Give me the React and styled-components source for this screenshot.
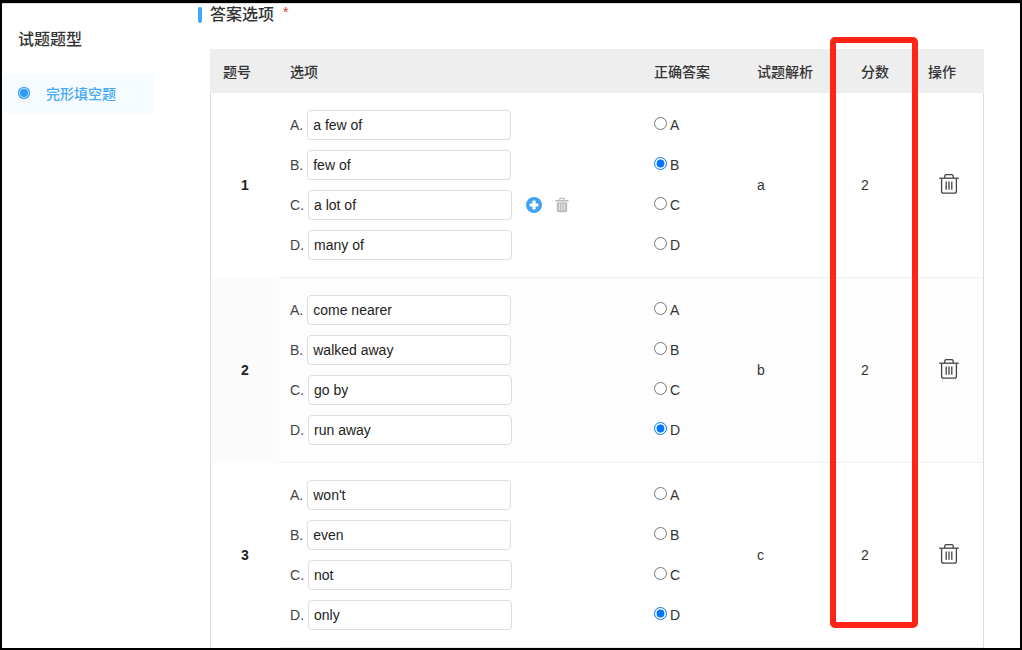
import React from "react";
import styled, { createGlobalStyle } from "styled-components";

const Global = createGlobalStyle`
  html, body { margin: 0; padding: 0; background: #fff; overflow: hidden; }
`;

const Frame = styled.div`
  box-sizing: border-box;
  width: 1022px;
  height: 650px;
  position: relative;
  overflow: hidden;
  background: #fff;
  border-style: solid;
  border-color: #000;
  border-width: 3px 2px 2px 2px;
  font-family: "Liberation Sans", "Noto Sans CJK SC", sans-serif;
  color: #333;
`;
const Inner = styled.div`
  display: flex;
  height: 100%;
  box-sizing: border-box;
  border-top: 1px solid #ddd;
`;
const Sidebar = styled.aside`
  width: 196px;
  flex: none;
  padding-top: 25px;
  box-sizing: border-box;
`;
const SideTitle = styled.div`
  font-size: 16px;
  font-weight: 500;
  line-height: 22px;
  color: #333;
  padding-left: 16px;
`;
const SideItem = styled.div`
  margin: 23px 0 0 1px;
  width: 151px;
  height: 39px;
  background: #f6fbff;
  display: flex;
  align-items: center;
  padding: 0 0 1px 15px;
  box-sizing: border-box;
  gap: 16px;
  font-size: 14px;
  font-weight: 500;
  color: #45a9f5;
`;
const Dot = styled.span`
  width: 12px;
  height: 12px;
  box-sizing: border-box;
  border-radius: 50%;
  background: #2f9bf4;
  box-shadow: inset 0 0 0 1px #2f9bf4, inset 0 0 0 2px #bfe0fb;
`;
const Main = styled.main`
  flex: 1;
  min-width: 0;
`;
const Heading = styled.div`
  display: flex;
  align-items: center;
  height: 16px;
  margin-top: 3px;
  font-size: 16px;
  font-weight: 500;
  line-height: 22px;
  color: #333;
`;
const HeadBar = styled.span`
  width: 4px;
  height: 16px;
  border-radius: 2px;
  background: #3fa7f7;
  margin-right: 8px;
`;
const Req = styled.span`
  color: #d9342b;
  font-size: 14px;
  font-weight: 400;
  margin-left: 9px;
  position: relative;
  top: -3px;
`;
const Table = styled.div`
  margin: 26px 0 0 12px;
  width: 774px;
  height: 620px;
  box-sizing: border-box;
  border-left: 1px solid #ddd;
  border-right: 1px solid #ddd;
`;
const grid = `
  display: grid;
  grid-template-columns: 68px 364px 103px 104px 67px 1fr;
`;
const HeadRow = styled.div`
  ${grid}
  height: 44px;
  margin: 0 -1px;
  grid-template-columns: 69px 364px 103px 104px 67px 1fr;
  background: #eee;
  align-items: center;
  font-size: 14px;
  font-weight: 500;
  color: #333;
`;
const HeadCell = styled.div`
  padding-left: ${(p) => p.$pad ?? 11}px;
`;
const Row = styled.div`
  ${grid}
  height: 185px;
`;
const NumCell = styled.div`
  display: flex;
  align-items: center;
  justify-content: center;
  padding-bottom: 1px;
  font-size: 14px;
  font-weight: 700;
  color: #222;
  background: ${(p) => (p.$alt ? "#fbfbfb" : "#fff")};
`;
const Cell = styled.div`
  border-bottom: 1px solid #eee;
  background: ${(p) => (p.$alt ? "#fdfdfd" : "#fff")};
  padding-left: 11px;
  display: flex;
  font-size: 14px;
  color: #333;
  align-items: center;
`;
const Stack = styled.div`
  display: flex;
  flex-direction: column;
  gap: 10px;
`;
const OptRow = styled.label`
  display: flex;
  align-items: center;
  height: 30px;
  font-size: 14px;
  color: #444;
`;
const OptInput = styled.input`
  box-sizing: border-box;
  width: 204px;
  height: 30px;
  margin-left: 4px;
  padding: 0 5px;
  background: #fff;
  border: 1px solid #ddd;
  border-radius: 4px;
  font: 14px "Liberation Sans", sans-serif;
  color: #222;
  outline: none;
`;
const OptTools = styled.span`
  display: inline-flex;
  align-items: center;
  gap: 12px;
  margin-left: 14px;
`;
const RadioRow = styled.label`
  display: flex;
  align-items: center;
  height: 30px;
  font-size: 14px;
  color: #333;
`;
const Radio = styled.input`
  width: 13px;
  height: 13px;
  margin: -3px 3px 0 0;
`;
const TrashButton = styled.span`
  display: flex;
  margin: -2px 0 0 11px;
  color: #444;
`;

const PlusIcon = () => (
  <svg width="16" height="16" viewBox="0 0 16 16" aria-hidden="true">
    <circle cx="8" cy="8" r="8" fill="#3fa4f5" />
    <rect x="3.6" y="6.4" width="8.8" height="3.2" rx="0.6" fill="#fff" />
    <rect x="6.4" y="3.6" width="3.2" height="8.8" rx="0.6" fill="#fff" />
  </svg>
);
const SmallTrash = () => (
  <svg width="16" height="16" viewBox="0 0 16 16" aria-hidden="true">
    <path d="M1.5 3h13v1.6h-13z" fill="#bbb" />
    <path d="M5.5 3l.6-1.6h3.8l.6 1.6" fill="none" stroke="#bbb" strokeWidth="1.2" />
    <path d="M2.8 5.4h10.4v8.4a1.4 1.4 0 0 1-1.4 1.4H4.2a1.4 1.4 0 0 1-1.4-1.4z" fill="#bbb" />
    <path d="M5.6 6.8v6.6M8 6.8v6.6M10.4 6.8v6.6" stroke="#eee" strokeWidth="1" />
  </svg>
);
const BigTrash = () => (
  <svg width="20" height="20" viewBox="0 0 20 20" fill="none" stroke="currentColor" strokeWidth="1.3" aria-hidden="true">
    <path d="M0.2 4.2h19.6" />
    <path d="M5.8 4V2.2A1.6 1.6 0 0 1 7.4 0.6h5.2A1.6 1.6 0 0 1 14.2 2.2V4" />
    <path d="M2.6 4.4v12.8a2 2 0 0 0 2 2h10.8a2 2 0 0 0 2-2V4.4" />
    <path d="M7.2 7.4v8.4M10 7.4v8.4M12.8 7.4v8.4" />
  </svg>
);
const RedBox = styled.div`
  position: absolute;
  left: 828px;
  top: 34px;
  width: 88px;
  height: 591px;
  box-sizing: border-box;
  border: 6px solid #ff2416;
  border-radius: 5px;
  pointer-events: none;
`;

const questions = [
  { n: 1, opts: ["a few of", "few of", "a lot of", "many of"], answer: "B", note: "a", score: 2 },
  { n: 2, opts: ["come nearer", "walked away", "go by", "run away"], answer: "D", note: "b", score: 2 },
  { n: 3, opts: ["won't", "even", "not", "only"], answer: "D", note: "c", score: 2 },
];
const letters = ["A", "B", "C", "D"];

export default function App() {
  return (
    <>
      <Global />
      <Frame>
        <Inner>
          <Sidebar>
            <SideTitle>试题题型</SideTitle>
            <SideItem>
              <Dot />
              完形填空题
            </SideItem>
          </Sidebar>
          <Main>
            <Heading>
              <HeadBar />
              答案选项
              <Req>*</Req>
            </Heading>
            <Table>
              <HeadRow>
                <HeadCell $pad={13}>题号</HeadCell>
                <HeadCell>选项</HeadCell>
                <HeadCell>正确答案</HeadCell>
                <HeadCell>试题解析</HeadCell>
                <HeadCell>分数</HeadCell>
                <HeadCell>操作</HeadCell>
              </HeadRow>
              {questions.map((q, i) => {
                const alt = i === 1;
                return (
                  <Row key={q.n}>
                    <NumCell $alt={alt}>{q.n}</NumCell>
                    <Cell $alt={alt}>
                      <Stack>
                        {q.opts.map((o, j) => (
                          <OptRow key={o}>
                            {letters[j]}.
                            <OptInput defaultValue={o} />
                            {i === 0 && j === 2 && (
                              <OptTools>
                                <PlusIcon />
                                <SmallTrash />
                              </OptTools>
                            )}
                          </OptRow>
                        ))}
                      </Stack>
                    </Cell>
                    <Cell $alt={alt}>
                      <Stack>
                        {letters.map((l) => (
                          <RadioRow key={l}>
                            <Radio type="radio" name={`q${q.n}`} defaultChecked={l === q.answer} />
                            {l}
                          </RadioRow>
                        ))}
                      </Stack>
                    </Cell>
                    <Cell $alt={alt}>{q.note}</Cell>
                    <Cell $alt={alt}>{q.score}</Cell>
                    <Cell $alt={alt}>
                      <TrashButton>
                        <BigTrash />
                      </TrashButton>
                    </Cell>
                  </Row>
                );
              })}
            </Table>
          </Main>
        </Inner>
        <RedBox />
      </Frame>
    </>
  );
}
